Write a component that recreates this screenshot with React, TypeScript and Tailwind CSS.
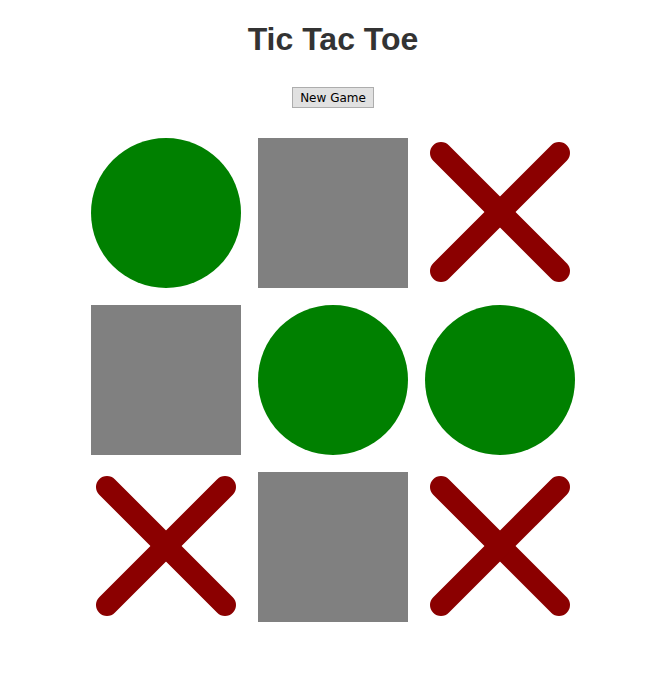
import React from 'react';

type Cell = 'X' | 'O' | null;

const board: Cell[] = ['O', null, 'X', null, 'O', 'O', 'X', null, 'X'];

function Mark({ value }: { value: Cell }) {
  if (value === 'O') {
    return <div className="h-[150px] w-[150px] rounded-full bg-[#008000]" />;
  }
  if (value === 'X') {
    return (
      <div className="h-[150px] w-[150px]">
        <svg viewBox="0 0 150 150" className="h-full w-full">
          <line x1="16" y1="15" x2="134" y2="133" stroke="#8b0000" strokeWidth="22" strokeLinecap="round" />
          <line x1="134" y1="15" x2="16" y2="133" stroke="#8b0000" strokeWidth="22" strokeLinecap="round" />
        </svg>
      </div>
    );
  }
  return <div className="h-[150px] w-[150px] bg-[#808080]" />;
}

export default function App() {
  return (
    <div className="flex min-h-[698px] flex-col items-center bg-white font-['Liberation_Sans',Arial,sans-serif]">
      <h1 className="mt-[21px] text-[32px] font-bold leading-[37px] text-[#333333]">Tic Tac Toe</h1>
      <button className="mt-[29px] h-[21px] w-[82px] border border-[#adadad] bg-[#e1e1e1] font-['DejaVu_Sans',sans-serif] text-[12px] leading-none text-black">
        New Game
      </button>
      <div className="mt-[30px] grid grid-cols-[repeat(3,150px)] gap-[17px]">
        {board.map((cell, idx) => (
          <Mark key={idx} value={cell} />
        ))}
      </div>
    </div>
  );
}
